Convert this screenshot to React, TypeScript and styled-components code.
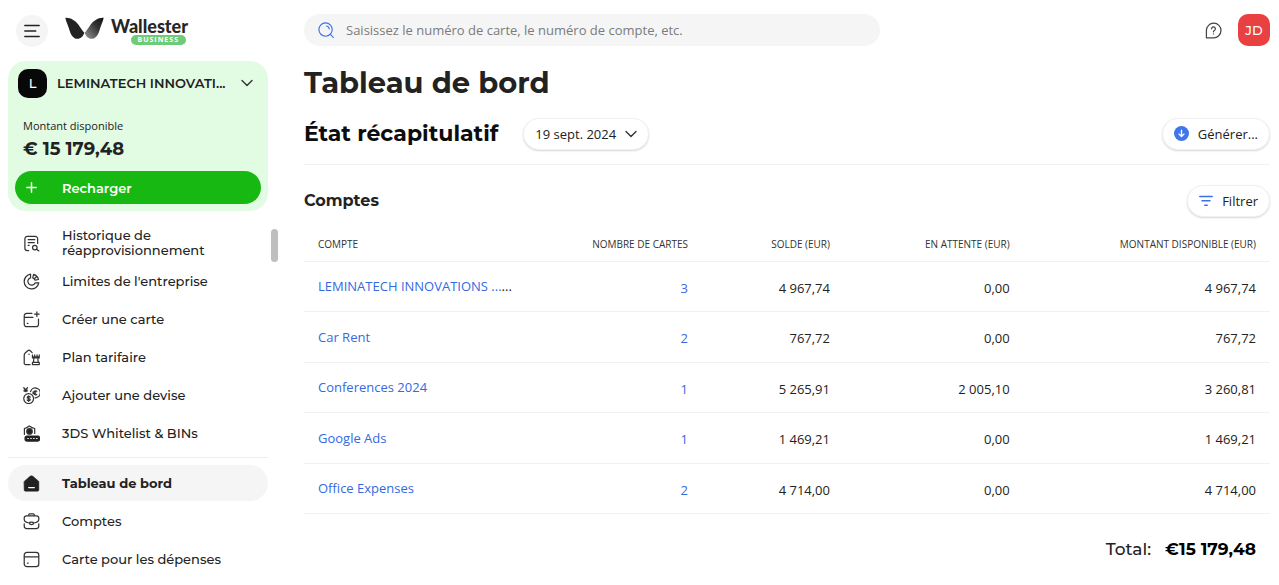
import React from 'react';
import styled, { createGlobalStyle } from 'styled-components';

const GlobalStyle = createGlobalStyle`
  *, *::before, *::after { box-sizing: border-box; }
  body { margin: 0; background: #fff; color: #222; font-family: "Open Sans", "Noto Sans", sans-serif; font-size: 13px; overflow: hidden; }
  button, input { font: inherit; color: inherit; }
  button { border: 0; padding: 0; background: none; cursor: pointer; }
  a { text-decoration: none; }
  h1, h2, h3, p { margin: 0; }
  svg { display: block; flex: none; }
`;

const display = '"Montserrat", "Inter", sans-serif';

const Page = styled.div`
  display: grid;
  grid-template-columns: 280px minmax(0, 1fr);
  height: 100vh;
  overflow: hidden;
`;

const Sidebar = styled.aside`
  display: flex;
  flex-direction: column;
  padding-left: 8px;
  min-height: 0;
`;

const Brand = styled.header`
  display: flex;
  align-items: center;
  gap: 17px;
  height: 61px;
  padding-left: 8px;
`;

const MenuButton = styled.button`
  display: grid;
  place-items: center;
  width: 32px;
  height: 32px;
  border-radius: 50%;
  background: #f5f5f5;
`;

const Logo = styled.a`
  display: flex;
  align-items: flex-start;
  gap: 7px;
  color: #262626;
`;

const LogoText = styled.span`
  display: flex;
  flex-direction: column;
  align-items: flex-end;
  font: 900 18px/18px "Lato", sans-serif;
`;

const LogoTag = styled.span`
  padding: 0 7px;
  margin-right: 2px;
  border-radius: 5px;
  background: #6fcb78;
  color: #fff;
  font: 700 7px/10px "Open Sans", sans-serif;
  letter-spacing: 1px;
`;

const BalanceCard = styled.section`
  display: flex;
  flex-direction: column;
  width: 260px;
  height: 150px;
  padding: 7px;
  border-radius: 18px;
  background: #e2fbe3;
`;

const AccountSwitch = styled.button`
  display: flex;
  align-items: center;
  gap: 10px;
  height: 30px;
  padding: 0 8px 0 3px;
  font: 600 13px/18px ${display};
`;

const AccountName = styled.span`
  flex: 1;
  text-align: left;
  white-space: nowrap;
`;

const Avatar = styled.span<{ $size: number; $color: string }>`
  display: grid;
  place-items: center;
  width: ${p => p.$size}px;
  height: ${p => p.$size}px;
  border-radius: 10px;
  background: ${p => p.$color};
  color: #fff;
  font: 500 13px/16px ${display};
`;

const BalanceLabel = styled.p`
  margin: 20px 8px 0;
  font-size: 11px;
  line-height: 16px;
`;

const Balance = styled.p`
  margin: 2px 8px 0;
  font: 700 18px/26px ${display};
`;

const TopUp = styled.button`
  display: flex;
  align-items: center;
  gap: 25px;
  height: 33px;
  margin-top: auto;
  padding-left: 11px;
  border-radius: 17px;
  background: #17b811;
  color: #fff;
  font: 600 13px/18px ${display};
`;

const NavScroll = styled.nav`
  display: flex;
  align-items: flex-start;
  justify-content: space-between;
  flex: 1;
  min-height: 0;
  padding: 14px 2px 0 0;
`;

const Thumb = styled.span`
  width: 7px;
  height: 33px;
  margin-top: 4px;
  border-radius: 4px;
  background: #bfbfbf;
`;

const NavList = styled.ul`
  display: flex;
  flex-direction: column;
  gap: 2px;
  width: 260px;
  margin: 0;
  padding: 0;
  list-style: none;
`;

const NavLink = styled.a<{ $active?: boolean }>`
  display: flex;
  align-items: center;
  gap: 22px;
  height: 36px;
  padding-left: 15px;
  border-radius: 18px;
  background: ${p => (p.$active ? '#f5f5f5' : 'transparent')};
  color: #222;
  font: ${p => (p.$active ? 700 : 500)} 13px/15px ${display};
  span { width: 170px; }
`;

const Divider = styled.li`
  height: 1px;
  margin: 4px 0 5px;
  background: #eee;
`;

const Main = styled.main`
  padding: 0 9px 0 24px;
`;

const TopBar = styled.header`
  display: flex;
  align-items: center;
  height: 60px;
`;

const SearchBox = styled.label`
  display: flex;
  align-items: center;
  gap: 12px;
  width: 576px;
  height: 32px;
  padding: 0 14px;
  border-radius: 16px;
  background: #f5f5f5;
  input {
    flex: 1;
    padding: 0;
    border: 0;
    outline: 0;
    background: none;
    font-size: 13px;
  }
  input::placeholder { color: #7b7b7b; opacity: 1; }
`;

const UserTools = styled.div`
  display: flex;
  align-items: center;
  gap: 16px;
  margin-left: auto;
`;

const Title = styled.h1`
  font: 700 29px/46px ${display};
`;

const SummaryBar = styled.div`
  display: flex;
  align-items: center;
  height: 59px;
  padding-bottom: 3px;
  border-bottom: 1px solid #f1f1f1;
`;

const Subtitle = styled.h2`
  margin-right: 25px;
  color: #0d0d0d;
  font: 700 22px/30px ${display};
`;

const PillButton = styled.button<{ $end?: boolean }>`
  display: flex;
  align-items: center;
  gap: 9px;
  height: 32px;
  padding: 0 11px;
  margin-left: ${p => (p.$end ? 'auto' : '0')};
  border: 1px solid #f1f1f1;
  border-radius: 16px;
  background: #fff;
  box-shadow: 0 1px 2px rgba(0, 0, 0, 0.16);
  font-size: 13px;
  white-space: nowrap;
`;

const SectionBar = styled.div`
  display: flex;
  align-items: center;
  padding: 20px 0 11px;
`;

const SectionTitle = styled.h3`
  font: 700 16px/24px ${display};
`;

const Table = styled.table`
  width: 100%;
  height: 286px;
  table-layout: fixed;
  border-collapse: collapse;
`;

const Col = styled.col<{ $w: number }>`
  width: ${p => p.$w}%;
`;

const Th = styled.th<{ $left?: boolean }>`
  height: 33px;
  padding: 0 14px;
  border-bottom: 1px solid #f1f1f1;
  color: #333;
  font-size: 10px;
  font-weight: 400;
  white-space: nowrap;
  text-align: ${p => (p.$left ? 'left' : 'right')};
`;

const Td = styled.td<{ $left?: boolean }>`
  padding: ${p => (p.$left ? '0 14px' : '3px 14px 0')};
  border-bottom: 1px solid #f1f1f1;
  font-size: 13px;
  line-height: 20px;
  white-space: nowrap;
  text-align: ${p => (p.$left ? 'left' : 'right')};
  a { color: #3569e2; }
`;

const Total = styled.p`
  display: flex;
  justify-content: flex-end;
  gap: 14px;
  padding: 23px 14px 0;
  font: 500 17px/24px ${display};
  strong { font-weight: 700; color: #000; }
`;

const Icon = ({ size = 17, color = '#333', children }: { size?: number; color?: string; children: React.ReactNode }) => (
  <svg width={size} height={size} viewBox="0 0 18 18" fill="none" stroke={color} strokeWidth="1.3" strokeLinecap="round" strokeLinejoin="round" aria-hidden="true">
    {children}
  </svg>
);

const Chevron = () => (
  <svg width="12" height="12" viewBox="0 0 12 12" fill="none" stroke="#333" strokeWidth="1.4" strokeLinecap="round" strokeLinejoin="round" aria-hidden="true">
    <path d="M1 3.500l5 5 5-5" />
  </svg>
);

const icons = {
  history: (
    <Icon>
      <path d="M6 16.500H4.500A2.500 2.500 0 0 1 2 14V4a2.500 2.500 0 0 1 2.500-2.500h8.500a2.500 2.500 0 0 1 2.500 2.500v5M5.500 5h7M5.500 8h6.500M5.500 11h1" />
      <circle cx="12.500" cy="13.300" r="2.400" />
      <path d="M14.300 15.200l2.400 1.600" />
    </Icon>
  ),
  limits: (
    <Icon>
      <path d="M8 1.300a7.800 7.800 0 1 0 8.700 9.200h-3.900A4 4 0 1 1 8 5.100z" />
      <path d="M11.200 1.500a7.600 7.600 0 0 1 5.200 5.400l-3.600.7a4 4 0 0 0-2.500-2.500zM12.200 5.800l2.600-2.300" />
    </Icon>
  ),
  create: (
    <Icon>
      <path d="M9.500 2.500H4A2.600 2.600 0 0 0 1.300 5v9A2.600 2.600 0 0 0 4 16.600h9.800a2.600 2.600 0 0 0 2.600-2.600V8.500M1.500 6.800h9M14.700.8v5M12.200 3.300h5M4.500 13h.8" />
    </Icon>
  ),
  plan: (
    <Icon>
      <path d="M7.500 16.500H2.800A1.500 1.500 0 0 1 1.300 15V6.500a3 3 0 0 1 1-2.200L5 1.800a2 2 0 0 1 2.700 0l2 2M6.400 5.500v.4" />
      <path d="M10 6.300v3.200h7.200V6.300M12.400 6.300v1.500M14.900 6.300v1.500M11.500 9.800l-.4 4.200M15.700 9.800l.4 4.200M10 14.200h7.200v2.300H10zM10.500 8.300h6.300" />
    </Icon>
  ),
  currency: (
    <Icon>
      <circle cx="6" cy="12.300" r="5.200" />
      <path d="M8 5a5.200 5.200 0 1 1 4.800 6.400" />
      <path d="M7.700 10.600c-.7-.9-3.200-.8-3.200.4 0 1.500 3.200 1 3.200 2.400 0 1.200-2.700 1.300-3.400.3M6 9.300v6M14.600 4.500c-2-1.200-3.300 0-3.300 1.600s1.400 3 3.300 1.800M10.500 5.500h3M10.500 6.900h2.700" />
      <path d="M.8.800l2 2 2-2M2.800 2.800V5M1 3.200h3.600M1.200 4.500h3.200" />
    </Icon>
  ),
  whitelist: (
    <Icon>
      <path d="M1.500 10V3.700C3.300 3.300 4.800 2.500 6.700 1c1.900 1.500 3.400 2.300 5.700 2.700V9" />
      <circle cx="6.900" cy="6.800" r="2.900" fill="#222" />
      <rect x="2.200" y="11.700" width="15.300" height="5.300" rx="2" fill="#222" stroke="#222" />
      <path d="M5.100 14.300h.5M8.200 14.300h.5M11.300 14.300h.5M14.400 14.300h.5" stroke="#fff" />
    </Icon>
  ),
  home: (
    <Icon>
      <path d="M1.200 6.800L7.400 1.400a2.400 2.400 0 0 1 3.200 0l6.200 5.400V16a1.200 1.200 0 0 1-1.200 1.200H2.400A1.200 1.200 0 0 1 1.200 16z" fill="#222" stroke="#222" strokeWidth=".5" />
      <path d="M6 13.300h6" stroke="#fff" />
    </Icon>
  ),
  accounts: (
    <Icon>
      <path d="M6 3V2a1 1 0 0 1 1-1h4a1 1 0 0 1 1 1v1M3.500 3h11a2.200 2.200 0 0 1 2.200 2.200v1.800c0 2-2.700 3.300-5.400 3.600C11 9.200 7 9.200 6.700 10.600 4 10.300 1.300 9 1.300 7V5.200A2.200 2.200 0 0 1 3.500 3zM1.300 11.500v2.300A2.700 2.700 0 0 0 4 16.500h10a2.700 2.700 0 0 0 2.700-2.700v-2.300M6.700 10.700c.3 2 4.300 2 4.600 0" />
    </Icon>
  ),
  card: (
    <Icon>
      <rect x="1.300" y="1.500" width="15.400" height="15" rx="2.800" />
      <path d="M1.500 6.200h15M4.700 12.800h.8" />
    </Icon>
  ),
};

const quickLinks: [keyof typeof icons, string][] = [
  ['history', 'Historique de réapprovisionnement'],
  ['limits', "Limites de l'entreprise"],
  ['create', 'Créer une carte'],
  ['plan', 'Plan tarifaire'],
  ['currency', 'Ajouter une devise'],
  ['whitelist', '3DS Whitelist & BINs'],
];

const pageLinks: [keyof typeof icons, string][] = [
  ['home', 'Tableau de bord'],
  ['accounts', 'Comptes'],
  ['card', 'Carte pour les dépenses'],
];

const rows = [
  { name: 'LEMINATECH INNOVATIONS ...', clipped: true, cards: 3, balance: '4 967,74', pending: '0,00', available: '4 967,74' },
  { name: 'Car Rent', cards: 2, balance: '767,72', pending: '0,00', available: '767,72' },
  { name: 'Conferences 2024', cards: 1, balance: '5 265,91', pending: '2 005,10', available: '3 260,81' },
  { name: 'Google Ads', cards: 1, balance: '1 469,21', pending: '0,00', available: '1 469,21' },
  { name: 'Office Expenses', cards: 2, balance: '4 714,00', pending: '0,00', available: '4 714,00' },
];

const NavItem = ({ icon, label, active }: { icon: keyof typeof icons; label: string; active?: boolean }) => (
  <li>
    <NavLink href="#" $active={active} aria-current={active ? 'page' : undefined}>
      {icons[icon]}
      <span>{label}</span>
    </NavLink>
  </li>
);

export default function App() {
  return (
    <>
      <GlobalStyle />
      <Page>
        <Sidebar>
          <Brand>
            <MenuButton aria-label="Menu">
              <svg width="16" height="14" viewBox="0 0 16 14" stroke="#222" strokeWidth="1.4" strokeLinecap="round">
                <path d="M.8 1.500h14.400M.8 7h11M.8 12.500h14.400" />
              </svg>
            </MenuButton>
            <Logo href="#">
              <svg width="39" height="23" viewBox="0 0 39 23" aria-hidden="true">
                <defs>
                  <linearGradient id="wing" x1="0" y1="1" x2="1" y2="0">
                    <stop offset="0" stopColor="#999" />
                    <stop offset=".6" stopColor="#333" />
                    <stop offset="1" stopColor="#111" />
                  </linearGradient>
                </defs>
                <path d="M.3.700C5 .2 10 3 13.500 7.700c2 2.800 3.800 6 5.800 8-1 3.300-3.500 6.100-6.800 6.100-4.200 0-6.700-4-8-8.600C3.300 8.500 1 5 .3.700z" fill="#222" />
                <path d="M38.700.700C34 .2 29 3 25.500 7.700c-2 2.800-3.800 6-5.800 8 1 3.300 3.500 6.100 6.800 6.100 4.200 0 6.700-4 8-8.600C35.700 8.500 38 5 38.700.700z" fill="url(#wing)" />
              </svg>
              <LogoText>
                Wallester
                <LogoTag>BUSINESS</LogoTag>
              </LogoText>
            </Logo>
          </Brand>
          <BalanceCard>
            <AccountSwitch>
              <Avatar $size={29} $color="#080808">L</Avatar>
              <AccountName>LEMINATECH INNOVATI...</AccountName>
              <Chevron />
            </AccountSwitch>
            <BalanceLabel>Montant disponible</BalanceLabel>
            <Balance>€ 15 179,48</Balance>
            <TopUp>
              <svg width="11" height="11" viewBox="0 0 11 11" stroke="#fff" strokeWidth="1.500" strokeLinecap="round" aria-hidden="true">
                <path d="M5.500 .8v9.400M.8 5.500h9.400" />
              </svg>
              Recharger
            </TopUp>
          </BalanceCard>
          <NavScroll>
            <NavList>
              {quickLinks.map(([icon, label]) => (
                <NavItem key={label} icon={icon} label={label} />
              ))}
              <Divider />
              {pageLinks.map(([icon, label]) => (
                <NavItem key={label} icon={icon} label={label} active={icon === 'home'} />
              ))}
            </NavList>
            <Thumb />
          </NavScroll>
        </Sidebar>
        <Main>
          <TopBar>
            <SearchBox>
              <Icon size={16} color="#3b72e8">
                <circle cx="8.500" cy="8.500" r="7.500" />
                <path d="M14 14l3.200 3.200M9.500 4.500a4 4 0 0 1 3.200 3.200" />
              </Icon>
              <input type="search" aria-label="Rechercher" placeholder="Saisissez le numéro de carte, le numéro de compte, etc." />
            </SearchBox>
            <UserTools>
              <button aria-label="Aide">
                <Icon color="#444">
                  <path d="M1.500 16.700V9A7.700 7.700 0 1 1 9 16.700z" />
                  <path d="M7 7.200a2 2 0 1 1 2.900 1.800c-.7.400-.9.700-.9 1.400M9 12.500v.2" />
                </Icon>
              </button>
              <button aria-label="Profil">
                <Avatar $size={32} $color="#e94141">JD</Avatar>
              </button>
            </UserTools>
          </TopBar>
          <Title>Tableau de bord</Title>
          <SummaryBar>
            <Subtitle>État récapitulatif</Subtitle>
            <PillButton>
              19 sept. 2024
              <Chevron />
            </PillButton>
            <PillButton $end>
              <Icon size={15} color="#fff">
                <circle cx="9" cy="9" r="9" fill="#3f76ea" stroke="none" />
                <path d="M9 5v7.500M6 9.700l3 3 3-3" strokeWidth="1.600" />
              </Icon>
              Générer...
            </PillButton>
          </SummaryBar>
          <SectionBar>
            <SectionTitle>Comptes</SectionTitle>
            <PillButton $end>
              <svg width="14" height="12" viewBox="0 0 14 12" stroke="#3b72e8" strokeWidth="1.500" strokeLinecap="round" aria-hidden="true">
                <path d="M.8 1.500h12.400M3 5.800h8M5.800 10.200h2.400" />
              </svg>
              Filtrer
            </PillButton>
          </SectionBar>
          <Table>
            <colgroup>
              <Col $w={26} />
              <Col $w={15.200} />
              <Col $w={14.700} />
              <Col $w={18.600} />
              <Col $w={25.500} />
            </colgroup>
            <thead>
              <tr>
                <Th $left>COMPTE</Th>
                <Th>NOMBRE DE CARTES</Th>
                <Th>SOLDE (EUR)</Th>
                <Th>EN ATTENTE (EUR)</Th>
                <Th>MONTANT DISPONIBLE (EUR)</Th>
              </tr>
            </thead>
            <tbody>
              {rows.map(row => (
                <tr key={row.name}>
                  <Td $left>
                    <a href="#">{row.name}</a>
                    {row.clipped && '...'}
                  </Td>
                  <Td><a href="#">{row.cards}</a></Td>
                  <Td>{row.balance}</Td>
                  <Td>{row.pending}</Td>
                  <Td>{row.available}</Td>
                </tr>
              ))}
            </tbody>
          </Table>
          <Total>
            <span>Total:</span>
            <strong>€15 179,48</strong>
          </Total>
        </Main>
      </Page>
    </>
  );
}
